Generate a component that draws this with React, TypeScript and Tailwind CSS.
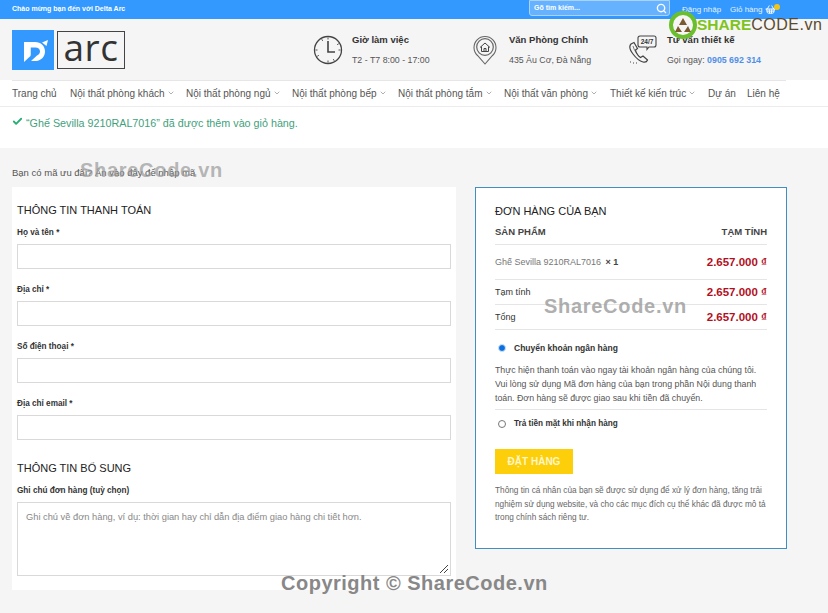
import { ChevronDown, Search, ShoppingBasket, Check } from "lucide-react";

const font = "font-['Liberation_Sans',Arial,sans-serif]";

const navItems = [
  { label: "Trang chủ", w: "w-[58px]" },
  { label: "Nội thất phòng khách", w: "w-[116px]", sub: true },
  { label: "Nội thất phòng ngủ", w: "w-[106px]", sub: true },
  { label: "Nội thất phòng bếp", w: "w-[106px]", sub: true },
  { label: "Nội thất phòng tắm", w: "w-[106px]", sub: true },
  { label: "Nội thất văn phòng", w: "w-[106px]", sub: true },
  { label: "Thiết kế kiến trúc", w: "w-[98px]", sub: true },
  { label: "Dự án", w: "w-[39px]" },
  { label: "Liên hệ", w: "w-[40px]" },
];

const fields = ["Họ và tên *", "Địa chỉ *", "Số điện thoại *", "Địa chỉ email *"];

function ClockIcon() {
  return (
    <svg width="30" height="30" viewBox="0 0 30 30" fill="none" stroke="#444" className="shrink-0">
      <circle cx="15" cy="15" r="13.5" strokeWidth="1.3" />
      <path d="M15 6v11h7" strokeWidth="1.6" />
      <path d="M15 2.5v2M15 25.5v2M2.5 15h2M25.5 15h2M8.7 4.2l1 1.7M20.3 24.1l1 1.7M4.2 21.3l1.7-1M24.1 9.7l1.7-1" strokeWidth="0.9" />
    </svg>
  );
}

function PinIcon() {
  return (
    <svg width="24" height="30" viewBox="0 0 24 30" fill="none" stroke="#666" className="shrink-0">
      <path d="M12 29 4.5 20.5A11 11 0 1 1 19.5 20.5Z" strokeWidth="1.1" />
      <circle cx="12" cy="12" r="8.3" strokeWidth="1.2" />
      <path d="M7 12.5 12 8l5 4.5M8.5 11.5V16.5h7V11.5M11 16.5V13.5h2v3" strokeWidth="1" stroke="#444" />
    </svg>
  );
}

function PhoneIcon() {
  return (
    <svg width="29" height="30" viewBox="0 0 29 30" fill="none" stroke="#444" className="shrink-0">
      <path d="M3 9c-2 2-1 6 2 10s6 7 10 8c2 .5 4-.5 4.5-2l-4.5-4-2.5 1.5c-2-1-4.5-4.5-5-7.5l2-1.5L6 7.5Z" strokeWidth="1.2" />
      <path d="M5 11c1 4 4 9 8 12" strokeWidth="0.7" />
      <path d="M2 27h1M5 28h1M8 28h1" strokeWidth="1.2" />
      <path d="M12 1h14a2 2 0 0 1 2 2v7a2 2 0 0 1-2 2h-5l-2 2.5V12h-7a2 2 0 0 1-2-2V3a2 2 0 0 1 2-2Z" strokeWidth="1.1" fill="#f5f5f5" />
      <text x="19" y="9" textAnchor="middle" fontSize="6.5" fontWeight="700" fill="#333" stroke="none" fontFamily="Liberation Sans">24/7</text>
    </svg>
  );
}

function Logo() {
  return (
    <div className="flex items-center gap-[3px]">
      <div className="w-[42px] h-[40px] bg-[#3399ff]">
        <svg width="42" height="40" viewBox="0 0 42 40">
          <path d="M12 12h11c6 0 10 4 10 9.5 0 5-3.5 9-9 9.5h-5l6-5.5c2-1 3-2.5 3-4 0-2.5-2-4-4.5-4H18.5v8L16 24v-.5l-4 7.5Z" fill="#fff" />
          <path d="M12 12h6.5v14L12 32Z" fill="#fff" />
          <path d="M30 12.5l6-2.5-1.5 6Z" fill="#fff" />
        </svg>
      </div>
      <div className="w-[68px] h-[38px] border-[1.5px] border-[#444] flex items-center justify-center text-[37px] leading-none text-[#333] tracking-[0.5px] font-['Open_Sans',sans-serif] pb-[6px]">
        arc
      </div>
    </div>
  );
}

function InfoBlock({ icon, title, gap, children }: { icon: React.ReactNode; title: string; gap: string; children: React.ReactNode }) {
  return (
    <div className={`flex items-center ${gap}`}>
      {icon}
      <div>
        <div className="text-[9.5px] font-bold text-[#333] leading-[14px] mb-[6px]">{title}</div>
        <div className="text-[8.8px] text-[#555] leading-[14px]">{children}</div>
      </div>
    </div>
  );
}

function PriceRow({ label }: { label: string }) {
  return (
    <div className="flex justify-between items-center border-b border-[#e5e5e5] h-[25px] pt-[2px]">
      <span className="text-[9px] text-[#333] -mt-[1px]">{label}</span>
      <span className="text-[11.5px] font-bold text-[#b20f1e]">2.657.000 ₫</span>
    </div>
  );
}

export default function App() {
  return (
    <div className={`${font} relative w-[828px] h-[613px] overflow-hidden bg-[#f5f5f5]`}>
      {/* top bar */}
      <div className="h-[19px] bg-[#3399ff] flex items-center pl-[12px] text-white">
        <span className="text-[7px] font-bold">Chào mừng bạn đến với Delta Arc</span>
        <div className="ml-auto mr-[48px] flex items-center">
          <div className="w-[141px] h-[16px] -mt-[3px] mr-[12px] bg-[#66b2ff] border border-[#a8d3ff] rounded-b-[3px] flex items-center justify-between pl-[4px] pr-[2px]">
            <span className="text-[7px] font-bold">Gõ tìm kiếm...</span>
            <Search size={11} strokeWidth={3} />
          </div>
          <span className="text-[8px] text-[#e4f1ff] w-[48px] whitespace-nowrap">Đăng nhập</span>
          <span className="text-[8px] text-[#e4f1ff] w-[35px] whitespace-nowrap">Giỏ hàng</span>
          <ShoppingBasket size={11} strokeWidth={2} />
          <span className="w-[6px] h-[6px] -mt-[6px] -ml-[2px] rounded-full bg-[#f2c417]" />
        </div>
      </div>

      {/* header */}
      <div className="h-[61px] flex items-center pl-[12px]">
        <Logo />
        <div className="ml-[188px] w-[160px]">
          <InfoBlock icon={<ClockIcon />} gap="gap-[9px]" title="Giờ làm việc">T2 - T7 8:00 - 17:00</InfoBlock>
        </div>
        <div className="w-[155px]">
          <InfoBlock icon={<PinIcon />} gap="gap-[12px]" title="Văn Phòng Chính">435 Âu Cơ, Đà Nẵng</InfoBlock>
        </div>
        <InfoBlock icon={<PhoneIcon />} gap="gap-[10px]" title="Tư vấn thiết kế">
          Gọi ngay: <span className="text-[#4f8fe8] font-bold">0905 692 314</span>
        </InfoBlock>
      </div>

      {/* nav */}
      <div className="h-[27px] bg-white border-b border-[#ececec]">
        <div className="mx-[12px] w-[774px] h-[25px] border-t border-[#e6e6e6] flex items-center">
          {navItems.map((item) => (
            <div key={item.label} className={`${item.w} shrink-0 flex items-center text-[10px] text-[#555] whitespace-nowrap`}>
              {item.label}
              {item.sub && <ChevronDown size={8} className="ml-[2px] text-[#888]" />}
            </div>
          ))}
        </div>
      </div>

      {/* notice */}
      <div className="h-[41px] bg-white pl-[12px] pt-[8px] flex items-start gap-[3px] text-[10.75px] text-[#3fa17c]">
        <Check size={11} strokeWidth={4} className="mt-[1px] text-[#27ae73]" />
        <span>“Ghế Sevilla 9210RAL7016” đã được thêm vào giỏ hàng.</span>
      </div>

      {/* coupon */}
      <div className="pl-[12px] pt-[19px] h-[39px] text-[9.5px] text-[#555] leading-[12px]">
        Bạn có mã ưu đãi? Ấn vào đây để nhập mã
      </div>

      <div className="flex items-start pl-[12px]">
        {/* billing */}
        <div className="w-[444px] h-[403px] bg-white px-[5px] pt-[16px] shrink-0">
          <h3 className="text-[11px] leading-[14px] text-[#222]">THÔNG TIN THANH TOÁN</h3>
          <div className="mt-[9px] flex flex-col gap-[14px]">
            {fields.map((f) => (
              <div key={f}>
                <div className="text-[8.2px] font-bold text-[#333] leading-[14px] mb-[4px]">{f}</div>
                <div className="h-[25px] border border-[#d9d9d9] bg-white" />
              </div>
            ))}
          </div>
          <h3 className="mt-[21px] text-[11px] leading-[14px] text-[#222]">THÔNG TIN BỔ SUNG</h3>
          <div className="mt-[10px] text-[8.2px] font-bold text-[#333] leading-[12px] mb-[5px]">Ghi chú đơn hàng (tuỳ chọn)</div>
          <div className="relative h-[74px] border border-[#d9d9d9] pl-[8px] pt-[7px] text-[9.3px] text-[#888] leading-[14px]">
            Ghi chú về đơn hàng, ví dụ: thời gian hay chỉ dẫn địa điểm giao hàng chi tiết hơn.
            <svg width="10" height="10" viewBox="0 0 10 10" className="absolute right-[1px] bottom-[1px]" stroke="#444" strokeWidth="1">
              <path d="M9 1 1 9M9 5 5 9" />
            </svg>
          </div>
        </div>

        {/* order */}
        <div className="ml-[19px] w-[312px] h-[362px] bg-white border border-[#3f8fc4] px-[19px] pt-[16px] shrink-0">
          <h3 className="text-[11px] leading-[14px] text-[#222]">ĐƠN HÀNG CỦA BẠN</h3>
          <div className="mt-[2px] h-[25px] flex justify-between items-center border-b border-[#e5e5e5] text-[9.5px] font-bold text-[#444]">
            <span>SẢN PHẨM</span>
            <span>TẠM TÍNH</span>
          </div>
          <div className="h-[35px] pt-[2px] flex justify-between items-center border-b border-[#e5e5e5]">
            <span className="text-[9px] text-[#777]">
              Ghế Sevilla 9210RAL7016 <span className="ml-[2px] font-bold text-[#444]">× 1</span>
            </span>
            <span className="text-[11.5px] font-bold text-[#b20f1e]">2.657.000 ₫</span>
          </div>
          <PriceRow label="Tạm tính" />
          <PriceRow label="Tổng" />
          <div className="mt-[11px] flex items-center h-[14px] pl-[3px]">
            <span className="w-[6px] h-[6px] rounded-full border-[1px] border-[#cfe4fb] bg-[#0b6fe0] box-content" />
            <span className="ml-[8px] text-[8.5px] font-bold text-[#333]">Chuyển khoản ngân hàng</span>
          </div>
          <p className="mt-[8px] text-[8.8px] leading-[14px] text-[#555] pb-[4px] border-b border-[#e5e5e5] whitespace-nowrap">
            Thực hiện thanh toán vào ngay tài khoản ngân hàng của chúng tôi.
            <br />
            Vui lòng sử dụng Mã đơn hàng của bạn trong phần Nội dung thanh
            <br />
            toán. Đơn hàng sẽ được giao sau khi tiền đã chuyển.
          </p>
          <div className="mt-[7px] flex items-center h-[14px] pl-[3px]">
            <span className="w-[8px] h-[8px] rounded-full border border-[#777] bg-white" />
            <span className="ml-[8px] text-[8.2px] font-bold text-[#333]">Trả tiền mặt khi nhận hàng</span>
          </div>
          <div className="mt-[18px] w-[78px] h-[25px] bg-[#fccf0a] flex items-center justify-center text-[10px] font-bold text-[#fff6c9]">
            ĐẶT HÀNG
          </div>
          <p className="mt-[10px] text-[8.25px] leading-[13.5px] text-[#666] whitespace-nowrap">
            Thông tin cá nhân của bạn sẽ được sử dụng để xử lý đơn hàng, tăng trải
            <br />
            nghiệm sử dụng website, và cho các mục đích cụ thể khác đã được mô tả
            <br />
            trong chính sách riêng tư.
          </p>
        </div>
      </div>

      {/* sharecode watermarks */}
      <div className="absolute left-[80px] top-[158px] text-[20px] leading-[24px] text-[#999]/70 tracking-[0.7px] font-bold">ShareCode.vn</div>
      <div className="absolute left-[544px] top-[294px] text-[20px] leading-[24px] text-[#999]/80 tracking-[0.7px] font-bold">ShareCode.vn</div>
      <div className="absolute left-[281px] top-[571px] text-[20px] leading-[24px] text-[#888] tracking-[0.5px] font-bold">Copyright © ShareCode.vn</div>
      <div className="absolute left-[669px] top-[11px] flex items-center">
        <svg width="28" height="28" viewBox="0 0 28 28" className="shrink-0">
          <circle cx="14" cy="14" r="12" fill="#f5f5f5" stroke="#6bbf2f" strokeWidth="4" />
          <path d="M14 7l4 7h-8ZM9 15l4 6H6ZM19 15l3 6h-7Z" fill="#7a5a2e" />
        </svg>
        <span className="text-[15.5px] leading-[24px] font-bold text-[#7fc31c]">SHARE</span>
        <span className="text-[16px] leading-[24px] tracking-[0.5px] text-[#5b4a2d]">CODE.vn</span>
      </div>
    </div>
  );
}
